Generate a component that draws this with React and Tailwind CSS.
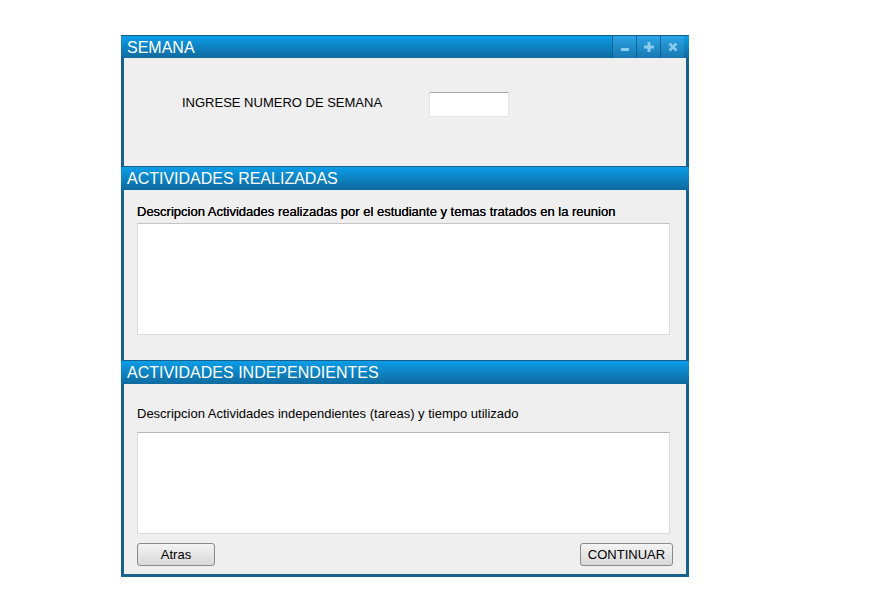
export default function App() {
  const header =
    "h-[24px] flex items-center pl-[6px] text-white text-[16px] leading-none border-t border-[#1a5e86] bg-gradient-to-b from-[#0a9de8] to-[#0f6a9e]"

  return (
    <div className="min-h-screen bg-white font-['Liberation_Sans',Arial,sans-serif] text-[13px] text-black">
      <div className="ml-[121px] pt-[35px] w-[568px]">
        {/* Title bar */}
        <div className="h-[23px] flex items-stretch border-t border-[#1a5e86] bg-gradient-to-b from-[#0a9de8] to-[#0f6a9e]">
          <div className="flex-1 flex items-center pl-[6px] pt-[1px] text-white text-[16px] leading-none">SEMANA</div>
          <div className="flex mr-[5px]">
            <div className="w-[24px] flex items-center justify-center bg-gradient-to-b from-[#2aa4e6] to-[#1878b0] border-l border-[#0e6295]">
              <svg width="10" height="10" viewBox="0 0 10 10">
                <rect x="1" y="6" width="8" height="3" fill="#8ccbee" />
              </svg>
            </div>
            <div className="w-[24px] flex items-center justify-center bg-gradient-to-b from-[#2aa4e6] to-[#1878b0] border-l border-[#0e6295]">
              <svg width="10" height="10" viewBox="0 0 10 10">
                <path d="M3.5 0h3v3.5H10v3H6.5V10h-3V6.5H0v-3h3.5z" fill="#8ccbee" />
              </svg>
            </div>
            <div className="w-[24px] flex items-center justify-center bg-gradient-to-b from-[#2aa4e6] to-[#1878b0] border-l border-[#0e6295]">
              <svg width="10" height="10" viewBox="0 0 10 10">
                <path d="M1.5 1.5l7 7M8.5 1.5l-7 7" stroke="#8ccbee" strokeWidth="2.6" />
              </svg>
            </div>
          </div>
        </div>

        {/* Semana */}
        <div className="h-[108px] bg-[#efefef] border-x-[3px] border-[#17628c] pt-[34px] pl-[58px] flex items-start">
          <div className="w-[247px] h-[21px] flex items-center text-[13px]">INGRESE NUMERO DE SEMANA</div>
          <input className="w-[80px] h-[25px] bg-white border border-[#e2e4e8] border-t-[#a8a8a8] outline-none" />
        </div>

        <div className={header}>ACTIVIDADES REALIZADAS</div>

        {/* Actividades realizadas */}
        <div className="h-[170px] bg-[#efefef] border-x-[3px] border-[#17628c] pl-[13px] pr-[16px] pt-[14px]">
          <div className="h-[15px] leading-[15px] text-[13px] [text-shadow:0_0_0.4px_#000]">
            Descripcion Actividades realizadas por el estudiante y temas tratados en la reunion
          </div>
          <textarea className="mt-[4px] block w-full h-[112px] resize-none bg-white border border-[#dcdcdc] border-t-[#c4c4c4] outline-none" />
        </div>

        <div className={header + " h-[23px]"}>ACTIVIDADES INDEPENDIENTES</div>

        {/* Actividades independientes */}
        <div className="h-[193px] bg-[#efefef] border-x-[3px] border-b-[3px] border-[#17628c] pl-[13px] pr-[16px] pt-[22px]">
          <div className="h-[15px] leading-[15px] text-[13px]">
            Descripcion Actividades independientes (tareas) y tiempo utilizado
          </div>
          <textarea className="mt-[11px] block w-full h-[102px] resize-none bg-white border border-[#dcdcdc] border-t-[#b8b8b8] outline-none" />
          <div className="mt-[9px] flex justify-between">
            <button className="w-[78px] h-[23px] rounded-[3px] border border-[#8a8a8a] bg-gradient-to-b from-[#f4f4f4] to-[#d8d8d8] text-[13px] leading-none">
              Atras
            </button>
            <button className="-mr-[3px] w-[93px] h-[23px] rounded-[3px] border border-[#8a8a8a] bg-gradient-to-b from-[#f4f4f4] to-[#d8d8d8] text-[13px] leading-none">
              CONTINUAR
            </button>
          </div>
        </div>
      </div>
    </div>
  )
}
